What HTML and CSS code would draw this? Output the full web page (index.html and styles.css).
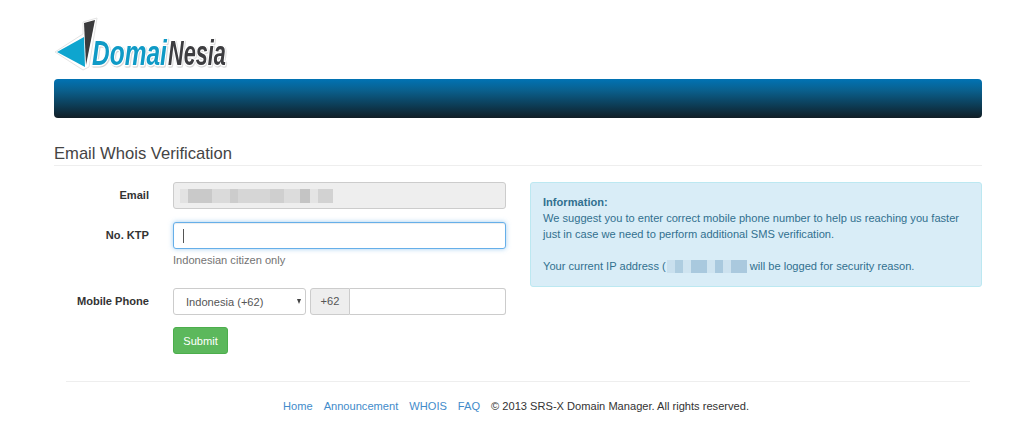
FILE: index.html
```html
<!DOCTYPE html>
<html lang="en">
<head>
<meta charset="utf-8">
<title>Email Whois Verification</title>
<link rel="stylesheet" href="styles.css">
</head>
<body>
<div class="page">
  <header class="logo-row">
    <svg class="logo" width="180" height="60" viewBox="0 0 180 60" aria-label="DomaiNesia">
      <path class="logo-halo" d="M0 37 L28 19 L28 7 L42 3 L34 52 L28 55 Z"/>
      <path class="logo-blue" d="M2 37 L29 22 L30 52 Z"/>
      <path class="logo-dark" d="M29 8 L40 5 L31 50 Z"/>
      <text class="logo-text logo-t-blue" transform="translate(37 50) scale(0.7 1)">Domai</text>
      <text class="logo-text logo-t-dark" transform="translate(113 50) scale(0.62 1)">Nesia</text>
    </svg>
  </header>
  <div class="banner"></div>
  <h1 class="title">Email Whois Verification</h1>
  <main class="columns">
    <form class="form">
      <div class="form-row">
        <label class="label">Email</label>
        <div class="control control-disabled"><span class="blur blur-email"></span></div>
      </div>
      <div class="form-row">
        <label class="label">No. KTP</label>
        <div class="field-stack">
          <div class="control control-focus"><span class="caret"></span></div>
          <p class="help">Indonesian citizen only</p>
        </div>
      </div>
      <div class="form-row phone-row">
        <label class="label">Mobile Phone</label>
        <div class="phone">
          <div class="control select">
            <span>Indonesia (+62)</span>
            <span class="arrow"></span>
          </div>
          <div class="input-group">
            <span class="addon">+62</span>
            <span class="group-input"></span>
          </div>
        </div>
      </div>
      <div class="form-row submit-row">
        <span class="label"></span>
        <button class="submit" type="button">Submit</button>
      </div>
    </form>
    <aside class="info">
      <strong>Information:</strong><br>
      We suggest you to enter correct mobile phone number to help us reaching you faster<br>
      just in case we need to perform additional SMS verification.<br><br>
      Your current IP address (<span class="blur blur-ip"></span> will be logged for security reason.
    </aside>
  </main>
  <footer class="footer">
    <a href="#">Home</a>
    <a href="#">Announcement</a>
    <a href="#">WHOIS</a>
    <a href="#">FAQ</a>
    <span>© 2013 SRS-X Domain Manager. All rights reserved.</span>
  </footer>
</div>
</body>
</html>
```
FILE: styles.css
```css
* { box-sizing: border-box; }
html, body { margin: 0; padding: 0; background: #fff; }
body {
  font-family: "Liberation Sans", Arial, sans-serif;
  font-size: 11.1px;
  line-height: 16px;
  color: #333;
}
.page { width: 928px; margin: 0 0 0 54px; height: 448px; overflow: hidden; }

.logo-row { height: 79px; padding-top: 15px; }
.logo { display: block; margin-left: 1px; overflow: visible; }
.logo-halo { fill: #fff; stroke: #e4e4e4; stroke-width: 1; }
.logo-blue { fill: #0ea5cf; }
.logo-dark { fill: #3a3a3c; }
.logo-text {
  font-family: "Liberation Sans", sans-serif;
  font-style: italic;
  font-weight: 700;
  font-size: 35px;
  paint-order: stroke;
  stroke: #fff;
  stroke-width: 3px;
  stroke-linejoin: round;
  filter: drop-shadow(1.5px 1.5px 0 #cfcfcf);
}
.logo-t-blue { fill: #0f9ac6; }
.logo-t-dark { fill: #3d3d40; }

.banner {
  height: 39px;
  border-radius: 4px;
  background: linear-gradient(to bottom, #0173b4 0%, #0a5f8c 30%, #0d3a52 70%, #111e26 100%);
}

.title {
  margin: 27px 0 0;
  height: 21px;
  font-size: 16.6px;
  line-height: 18px;
  font-weight: 400;
  color: #444;
  border-bottom: 1px solid #eee;
}

.columns { display: flex; margin-top: 16px; gap: 24px; height: 199px; }
.form { width: 452px; display: flex; flex-direction: column; }
.form-row { display: flex; gap: 24px; margin-bottom: 13px; }
.phone-row { margin-bottom: 12px; }
.label {
  width: 95px;
  flex: none;
  text-align: right;
  font-weight: 700;
  padding-top: 5px;
  color: #333;
}
.field-stack { width: 333px; }
.control {
  width: 333px;
  height: 27px;
  border: 1px solid #ccc;
  border-radius: 3px;
  background: #fff;
  display: flex;
  align-items: center;
  padding: 0 6px;
  color: #555;
}
.control-disabled { background: #eee; }
.control-focus {
  border-color: #66afe9;
  box-shadow: inset 0 1px 1px rgba(0,0,0,.075), 0 0 5px rgba(102,175,233,.6);
  padding: 0 9px;
}
.caret { display: block; width: 1px; height: 14px; background: #555; }
.help { margin: 3px 0 0; color: #737373; height: 23px; }

.phone { display: flex; gap: 4px; width: 333px; }
.select { width: 133px; padding: 0 12px; justify-content: space-between; flex: none; }
.arrow {
  width: 0; height: 0;
  border-left: 2.5px solid transparent;
  border-right: 2.5px solid transparent;
  border-top: 5px solid #444;
  margin-right: -8px;
}
.input-group { display: flex; flex: 1; height: 27px; }
.addon {
  width: 40px;
  background: #eee;
  border: 1px solid #ccc;
  border-radius: 3px 0 0 3px;
  text-align: center;
  line-height: 25px;
  color: #555;
}
.group-input {
  flex: 1;
  border: 1px solid #ccc;
  border-left: 0;
  border-radius: 0 3px 3px 0;
}
.submit-row { margin-bottom: 0; }
.submit {
  width: 55px;
  height: 27px;
  padding: 0;
  border: 1px solid #4cae4c;
  border-radius: 3px;
  background: #5cb85c;
  color: #fff;
  font: inherit;
}

.blur { display: inline-block; }
.blur-email {
  width: 153px;
  height: 14px;
  background: linear-gradient(to right,
    #e2e2e2 0 8px, #c9c9c9 8px 32px, #dadada 32px 50px, #ccc 50px 58px,
    #d6d6d6 58px 90px, #cfcfcf 90px 104px, #dcdcdc 104px 120px, #c4c4c4 120px 130px,
    #e4e4e4 130px 138px, #d2d2d2 138px 153px);
}
.blur-ip {
  width: 80px;
  height: 13px;
  margin-left: 1px;
  vertical-align: -3px;
  background: linear-gradient(to right,
    #c9e0ee 0 8px, #aecde0 8px 16px, #cfe4f0 16px 24px, #a9c9de 24px 40px,
    #cfe4f0 40px 48px, #a9c9de 48px 56px, #cde2ef 56px 64px, #aac9de 64px 80px);
}

.info {
  width: 452px;
  height: 105px;
  padding: 11px 12px;
  background: #d9edf7;
  border: 1px solid #bce8f1;
  border-radius: 3px;
  color: #31708f;
}

.footer {
  margin: 0 12px;
  border-top: 1px solid #eee;
  padding: 16px 4px 0 0;
  display: flex;
  justify-content: center;
  gap: 11px;
}
.footer a { color: #428bca; text-decoration: none; }
.footer span { color: #333; }
```
